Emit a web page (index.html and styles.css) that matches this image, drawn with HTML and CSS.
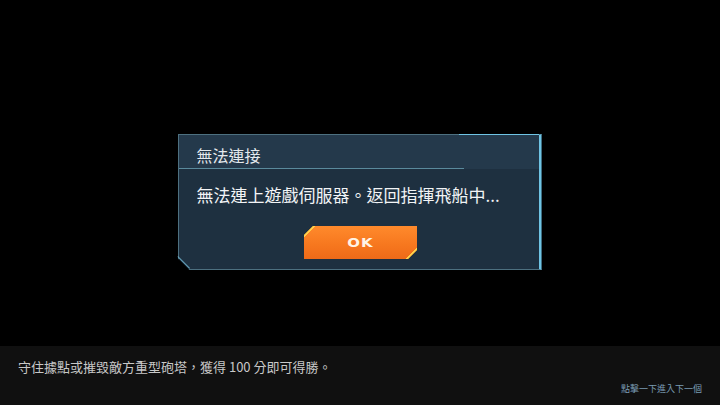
FILE: index.html
```html
<!DOCTYPE html>
<html lang="zh-Hant">
<head>
<meta charset="utf-8">
<link rel="stylesheet" href="styles.css">
</head>
<body>
<div class="stage">
  <div class="dialog">
    <div class="dialog-head">無法連接</div>
    <div class="dialog-body">
      <p class="msg">無法連上遊戲伺服器。返回指揮飛船中...</p>
      <button class="ok"><span>OK</span></button>
    </div>
  </div>
</div>
<div class="tipbar">
  <p class="tip">守住據點或摧毀敵方重型砲塔，獲得 100 分即可得勝。</p>
  <p class="next">點擊一下進入下一個</p>
</div>
</body>
</html>
```
FILE: styles.css
```css
html, body {
  margin: 0;
  padding: 0;
  width: 720px;
  height: 405px;
  background: #000;
  overflow: hidden;
  font-family: "Noto Sans CJK TC", "Noto Sans", sans-serif;
}
.stage {
  width: 720px;
  height: 405px;
  display: flex;
  align-items: center;
  justify-content: center;
}
.dialog {
  position: relative;
  width: 360px;
  height: 134px;
  margin-left: -1px;
  margin-top: -1px;
  background: #1e3040;
  border: 1px solid #4d7080;
  border-right: 3px solid #6fc4e4;
  clip-path: polygon(0 0, 100% 0, 100% 100%, 12px 100%, 0 calc(100% - 12px));
  display: flex;
  flex-direction: column;
}
.dialog::before {
  content: "";
  position: absolute;
  top: -1px;
  right: 0;
  width: 80px;
  height: 2px;
  background: #6fc4e4;
}
.dialog::after {
  content: "";
  position: absolute;
  left: -1px;
  bottom: 0;
  width: 17px;
  height: 1px;
  background: #6aa7bf;
  transform-origin: 0 0;
  transform: translateY(-12px) rotate(45deg);
}
.dialog-head {
  position: relative;
  height: 34px;
  box-sizing: border-box;
  padding: 10px 0 0 18px;
  background: #24394b;
  color: #e4eaee;
  font-size: 16px;
  line-height: 21px;
}
.dialog-head::after {
  content: "";
  position: absolute;
  left: 0;
  bottom: 0;
  width: 285px;
  height: 1px;
  background: #5a8a9c;
}
.dialog-body {
  flex: 1;
  display: flex;
  flex-direction: column;
  align-items: center;
}
.msg {
  margin: 15px 0 0 0;
  padding-left: 18px;
  align-self: flex-start;
  color: #f2f4f6;
  font-size: 17px;
  line-height: 22px;
}
.ok {
  margin-top: 20px;
  margin-left: 4px;
  width: 113px;
  height: 33px;
  border: 0;
  padding: 0;
  cursor: pointer;
  clip-path: polygon(9px 0, 100% 0, 100% calc(100% - 9px), calc(100% - 9px) 100%, 0 100%, 0 9px);
  background:
    linear-gradient(135deg, #ffd24a 0 8px, transparent 8px 14px, transparent 14px),
    linear-gradient(315deg, #ffd24a 0 8px, transparent 8px),
    linear-gradient(180deg, #ff8a2c 0%, #f7781f 55%, #ee6a18 100%);
  display: flex;
  align-items: center;
  justify-content: center;
}
.ok span {
  font-family: "DejaVu Sans", sans-serif;
  font-weight: bold;
  font-size: 13px;
  letter-spacing: 1px;
  color: #fff4e6;
  transform: scaleX(1.15);
}
.tipbar {
  position: absolute;
  left: 0;
  right: 0;
  bottom: 0;
  height: 59px;
  background: #101010;
}
.tip {
  margin: 0;
  position: absolute;
  left: 18px;
  top: 12px;
  color: #c8c8c8;
  font-size: 13px;
  line-height: 18px;
}
.next {
  margin: 0;
  position: absolute;
  right: 18px;
  top: 37px;
  color: #7a9cb4;
  font-size: 9px;
  line-height: 12px;
}
```
